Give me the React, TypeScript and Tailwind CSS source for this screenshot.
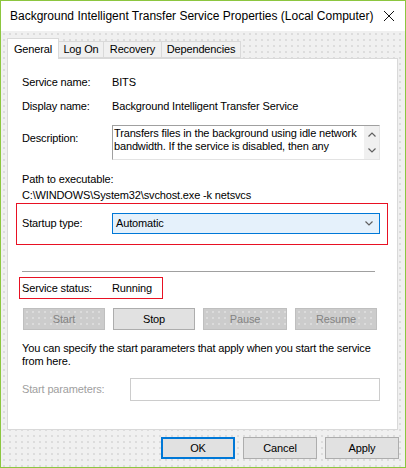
import React from 'react'

const dots =
  'bg-[radial-gradient(circle,#dcdcdc_0.7px,transparent_0.9px)] bg-[length:6px_6px]'

function Chevron({ up = false, className = '' }: { up?: boolean; className?: string }) {
  return (
    <svg width="8" height="5" viewBox="0 0 8 5" className={className}>
      <path
        d={up ? 'M0.5 4.5 L4 1 L7.5 4.5' : 'M0.5 0.5 L4 4 L7.5 0.5'}
        fill="none"
        stroke="#606060"
        strokeWidth="1.2"
      />
    </svg>
  )
}

function ActionButton({ label, disabled, width }: { label: string; disabled?: boolean; width: string }) {
  return (
    <div
      className={`${width} h-[22px] flex items-center justify-center border ${
        disabled
          ? `border-[#bfbfbf] bg-[#cccccc] text-[#838383] ${dots}`
          : 'border-[#adadad] bg-[#e1e1e1] text-black'
      }`}
    >
      {label}
    </div>
  )
}

export default function App() {
  return (
    <div
      className="w-[406px] h-[468px] border border-[#8cc63f] bg-[#f0f0f0] flex flex-col text-[11px] tracking-[-0.15px] text-black"
      style={{ fontFamily: '"Liberation Sans", Arial, sans-serif' }}
    >
      {/* Title bar */}
      <div className="h-[30px] bg-white flex items-center pl-[9px] pr-[10px] text-[12px] tracking-normal">
        <span className="flex-1">Background Intelligent Transfer Service Properties (Local Computer)</span>
        <svg width="12" height="12" viewBox="0 0 12 12">
          <path d="M1 1 L11 11 M11 1 L1 11" stroke="#111" strokeWidth="1" />
        </svg>
      </div>

      <div className={`flex-1 flex flex-col pt-[7px] pl-[6px] ${dots}`}>
        {/* Tabs */}
        <div className="flex items-end h-[20px] w-[390px]">
          <div className="h-[21px] w-[52px] bg-white border border-b-0 border-[#d9d9d9] flex items-center justify-center relative z-10 -mb-px">
            General
          </div>
          <div className="h-[17px] w-[45px] bg-[#f0f0f0] border border-l-0 border-[#d9d9d9] flex items-center justify-center">
            Log On
          </div>
          <div className="h-[17px] w-[58px] bg-[#f0f0f0] border border-l-0 border-[#d9d9d9] flex items-center justify-center">
            Recovery
          </div>
          <div className="h-[17px] w-[79px] bg-[#f0f0f0] border border-l-0 border-[#d9d9d9] flex items-center justify-center">
            Dependencies
          </div>
        </div>

        {/* Panel */}
        <div className="w-[391px] h-[372px] bg-white border border-[#d9d9d9] pl-[14px] pr-[17px] flex flex-col">
          <div className="mt-[15px] h-[16px] flex items-center">
            <span className="w-[90px]">Service name:</span>
            <span>BITS</span>
          </div>
          <div className="mt-[8px] h-[16px] flex items-center">
            <span className="w-[90px]">Display name:</span>
            <span>Background Intelligent Transfer Service</span>
          </div>
          <div className="mt-[11px] h-[35px] flex items-start">
            <span className="w-[90px] pt-[5px]">Description:</span>
            <div className="flex-1 h-[35px] border-t border-l border-[#a0a0a0] border-r border-b border-r-[#e3e3e3] border-b-[#e3e3e3] flex">
              <div className="flex-1 pl-[1px] pt-[1px] leading-[13px] overflow-hidden">
                <span className="block whitespace-nowrap">Transfers files in the background using idle network</span>
                <span className="block whitespace-nowrap">bandwidth. If the service is disabled, then any</span>
              </div>
              <div className="w-[15px] bg-[#f0f0f0] flex flex-col items-center justify-between py-[6px]">
                <Chevron up />
                <Chevron />
              </div>
            </div>
          </div>
          <div className="mt-[11px] h-[16px] flex items-center">Path to executable:</div>
          <div className="h-[16px] flex items-center">C:\WINDOWS\System32\svchost.exe -k netsvcs</div>

          {/* Startup type (highlighted) */}
          <div className="-ml-[6px] -mr-[8px] h-[42px] border border-[#e81123] pl-[5px] pr-[7px] pt-[9px]">
            <div className="flex items-center h-[21px]">
              <span className="w-[90px]">Startup type:</span>
              <div className="flex-1 h-[21px] border border-[#0078d7] bg-[#e5f1fb] flex items-center pl-[3px] pr-[6px]">
                <span className="flex-1">Automatic</span>
                <Chevron />
              </div>
            </div>
          </div>

          <div className="mt-[26px] h-px w-[353px] bg-[#a0a0a0]" />

          {/* Service status (highlighted) */}
          <div className="mt-[5px] -ml-[3px] w-[144px] h-[22px] border border-[#e81123] pl-[2px] flex items-center">
            <span className="w-[90px]">Service status:</span>
            <span>Running</span>
          </div>

          <div className="mt-[9px] flex gap-[8px] pl-[1px]">
            <ActionButton label="Start" disabled width="w-[82px]" />
            <ActionButton label="Stop" width="w-[82px]" />
            <ActionButton label="Pause" disabled width="w-[84px]" />
            <ActionButton label="Resume" disabled width="w-[82px]" />
          </div>

          <p className="mt-[12px] leading-[13px]">
            You can specify the start parameters that apply when you start the service from here.
          </p>

          <div className="mt-[10px] flex items-center">
            <span className="w-[108px] text-[#a0a0a0]">Start parameters:</span>
            <div className="flex-1 h-[23px] border border-[#cccccc] bg-white" />
          </div>
        </div>

        {/* Dialog buttons */}
        <div className="mt-[7px] flex justify-end gap-[8px] pr-[6px]">
          <div className="w-[74px] h-[22px] border-2 border-[#0078d7] bg-[#e1e1e1] flex items-center justify-center">
            OK
          </div>
          <div className="w-[74px] h-[22px] border border-[#adadad] bg-[#e1e1e1] flex items-center justify-center">
            Cancel
          </div>
          <div className="w-[74px] h-[22px] border border-[#adadad] bg-[#e1e1e1] flex items-center justify-center">
            Apply
          </div>
        </div>
      </div>
    </div>
  )
}
